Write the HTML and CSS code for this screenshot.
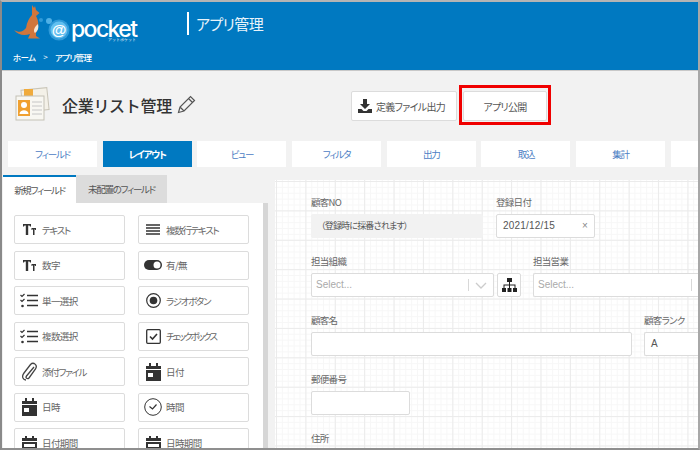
FILE: index.html
```html
<!DOCTYPE html>
<html lang="ja">
<head>
    <meta charset="utf-8">
    <title>アプリ管理</title>
    <link rel="stylesheet" href="styles.css">
</head>
<body>
    <div class="frame">
        <header class="header">
            <div class="header-top">
                <div class="logo">
                    <svg class="logo-mark" width="57" height="38" viewBox="0 0 57 38">
                        <path d="M0 25 C5 28 9 27 12 23 C13 17 15 13 18 10 L18 5 L18 0 L20 3 L21 1 L22 5 L25.500 8 L22 11 C25 16 25 23 22 28 L22 31 L26 33.500 L14 33.500 L16 29 C10 31 4 30 0 25 Z" fill="#d0763c"/>
                        <path d="M24 19 C25 23 24 26 21 28 C19 26 20 22 24 19 Z" fill="#f6e6d4"/>
                        <circle cx="27" cy="15" r="2" fill="#2f9ad8"/>
                        <circle cx="35" cy="16" r="3" fill="#4fb0e6"/>
                        <circle cx="45" cy="25" r="10.500" fill="#2f9ad8"/>
                        <circle cx="45" cy="25" r="8.500" fill="#62c0f0"/>
                        <text x="45" y="30" text-anchor="middle" class="logo-at">@</text>
                    </svg>
                    <span class="logo-text">pocket<small>アットポケット</small></span>
                </div>
                <div class="app-title">アプリ管理</div>
            </div>
            <nav class="crumbs"><b>ホーム</b><i>&gt;</i><b>アプリ管理</b></nav>
        </header>

        <section class="title-bar">
            <div class="page-title">
                <svg class="cards" width="36" height="36" viewBox="0 0 36 36">
                    <rect x="8" y="3" width="26" height="22" fill="#f4f1e8" stroke="#c9c5b8" transform="rotate(-6 20 14)"/>
                    <rect x="10" y="3" width="9" height="9" fill="#f0ab3c"/>
                    <rect x="2" y="10" width="28" height="24" fill="#f8f7f2" stroke="#c4c1b6"/>
                    <rect x="4" y="14" width="12" height="16" fill="#f0a030"/>
                    <circle cx="10" cy="19" r="3" fill="#fff"/>
                    <path d="M5.500 28 C5.500 23 14.500 23 14.500 28 Z" fill="#fff"/>
                    <path d="M18 16 H28 M18 20 H28 M18 24 H28 M18 28 H28" stroke="#c6c6c6"/>
                </svg>
                <h1>企業リスト管理</h1>
                <svg class="pencil" width="19" height="19" viewBox="0 0 19 19" fill="none" stroke="#555" stroke-width="1.200">
                    <path d="M1.500 17.500 L3 12 L13.500 1.500 L17.500 5.500 L7 16 Z M3 12 L7 16 M11.500 3.500 L15.500 7.500"/>
                </svg>
            </div>
            <div class="actions">
                <button class="action export">
                    <svg width="16" height="16" viewBox="0 0 16 16" fill="#333">
                        <path d="M6 1 H10 V6 H13 L8 11 L3 6 H6 Z"/>
                        <path d="M1 11 H4.500 L6.500 13 H9.500 L11.500 11 H15 V15 H1 Z"/>
                    </svg>
                    定義ファイル出力
                </button>
                <button class="action publish">アプリ公開</button>
            </div>
        </section>

        <nav class="tabs">
            <a class="tab">フィールド</a>
            <a class="tab active">レイアウト</a>
            <a class="tab">ビュー</a>
            <a class="tab">フィルタ</a>
            <a class="tab">出力</a>
            <a class="tab">取込</a>
            <a class="tab">集計</a>
            <a class="tab"></a>
        </nav>

        <main class="workspace">
            <aside class="palette">
                <div class="palette-tabs">
                    <span class="ptab current">新規フィールド</span>
                    <span class="ptab">未配置のフィールド</span>
                </div>
                <div class="palette-body">
                    <div class="palette-grid">
                        <div class="field-btn kana"><span class="ic"><svg width="13" height="11" viewBox="0 0 13 11" fill="#333"><path d="M0 0 H8 V2.500 H7 L6.500 1.500 H5.200 V11 H2.800 V1.500 H1.500 L1 2.500 H0 Z"/><path d="M8.500 4 H13 V6 H12.200 L12 5.300 H11.500 V11 H10 V5.300 H9.500 L9.300 6 H8.500 Z"/></svg></span>テキスト</div>
                        <div class="field-btn kana"><span class="ic"><svg width="14" height="11" viewBox="0 0 14 11" stroke="#333" stroke-width="1.300"><path d="M0 1 H14 M0 4 H14 M0 7 H14 M0 10 H14"/></svg></span>複数行テキスト</div>
                        <div class="field-btn"><span class="ic"><svg width="13" height="11" viewBox="0 0 13 11" fill="#333"><path d="M0 0 H8 V2.500 H7 L6.500 1.500 H5.200 V11 H2.800 V1.500 H1.500 L1 2.500 H0 Z"/><path d="M8.500 4 H13 V6 H12.200 L12 5.300 H11.500 V11 H10 V5.300 H9.500 L9.300 6 H8.500 Z"/></svg></span>数字</div>
                        <div class="field-btn"><span class="ic"><svg width="18" height="10" viewBox="0 0 18 10"><rect width="18" height="10" rx="5" fill="#333"/><circle cx="13" cy="5" r="3.500" fill="#fff"/></svg></span>有/無</div>
                        <div class="field-btn"><span class="ic"><svg width="18" height="15" viewBox="0 0 18 15" fill="none" stroke="#333"><path d="M0.500 2 L2 3.500 L4.500 1 M0.500 7 L2 8.500 L4.500 6" stroke-width="1.200"/><circle cx="2.500" cy="13" r="1.300" fill="#333" stroke="none"/><path d="M7 2.500 H18 M7 7.500 H18 M7 12.500 H18" stroke-width="1.600"/></svg></span>単一選択</div>
                        <div class="field-btn kana"><span class="ic"><svg width="15" height="15" viewBox="0 0 15 15" fill="none" stroke="#333"><circle cx="7.500" cy="7.500" r="6.800" stroke-width="1.200"/><circle cx="7.500" cy="7.500" r="3.800" fill="#333" stroke="none"/></svg></span>ラジオボタン</div>
                        <div class="field-btn"><span class="ic"><svg width="18" height="15" viewBox="0 0 18 15" fill="none" stroke="#333"><path d="M0.500 2 L2 3.500 L4.500 1 M0.500 7 L2 8.500 L4.500 6" stroke-width="1.200"/><circle cx="2.500" cy="13" r="1.300" fill="#333" stroke="none"/><path d="M7 2.500 H18 M7 7.500 H18 M7 12.500 H18" stroke-width="1.600"/></svg></span>複数選択</div>
                        <div class="field-btn kana tight"><span class="ic"><svg width="15" height="15" viewBox="0 0 15 15" fill="none" stroke="#333" stroke-width="1.300"><rect x="0.700" y="0.700" width="13.600" height="13.600" rx="1"/><path d="M4 7.500 L6.500 10 L11 5" stroke-width="1.600"/></svg></span>チェックボックス</div>
                        <div class="field-btn kana"><span class="ic"><svg width="15" height="19" viewBox="0 0 15 19" fill="none" stroke="#444" stroke-width="1.300"><path d="M12 5 L4.500 14 C3 16 5.500 17.500 7 16 L13.500 7 C16 3 11.500 -0.500 8.500 2.500 L2 11 C-1 15 1.500 18 4 18"/></svg></span>添付ファイル</div>
                        <div class="field-btn"><span class="ic"><svg width="15" height="18" viewBox="0 0 15 18" fill="#333"><path d="M3 0 H5 V3 H10 V0 H12 V3 H15 V6 H0 V3 H3 Z"/><path d="M0 7 H15 V18 H0 Z M2 10 V14 H7 V10 Z" fill-rule="evenodd"/></svg></span>日付</div>
                        <div class="field-btn"><span class="ic"><svg width="15" height="18" viewBox="0 0 15 18" fill="#333"><path d="M3 0 H5 V3 H10 V0 H12 V3 H15 V6 H0 V3 H3 Z"/><path d="M0 7 H15 V18 H0 Z M2 10 V14 H7 V10 Z" fill-rule="evenodd"/></svg></span>日時</div>
                        <div class="field-btn"><span class="ic"><svg width="18" height="18" viewBox="0 0 18 18" fill="none" stroke="#333"><circle cx="9" cy="9" r="8.300"/><path d="M5.500 8.500 L8.500 11 L12.500 6.500" stroke-width="1.200"/></svg></span>時間</div>
                        <div class="field-btn"><span class="ic"><svg width="15" height="14" viewBox="0 0 15 14" fill="#333"><path d="M3 0 H5 V2 H10 V0 H12 V2 H15 V5 H0 V2 H3 Z"/><path d="M0 6 H15 V14 H0 Z M2 8 V11 H13 V8 Z" fill-rule="evenodd"/></svg></span>日付期間</div>
                        <div class="field-btn"><span class="ic"><svg width="15" height="14" viewBox="0 0 15 14" fill="#333"><path d="M3 0 H5 V2 H10 V0 H12 V2 H15 V5 H0 V2 H3 Z"/><path d="M0 6 H15 V14 H0 Z M2 8 V11 H13 V8 Z" fill-rule="evenodd"/></svg></span>日時期間</div>
                    </div>
                    <div class="scrollbar"></div>
                </div>
            </aside>

            <section class="canvas">
                <div class="row first">
                    <div class="field w172"><label>顧客NO</label><div class="input readonly">（登録時に採番されます）</div></div>
                    <div class="field w99"><label>登録日付</label><div class="input date"><span>2021/12/15</span><em>×</em></div></div>
                </div>
                <div class="row">
                    <div class="field w210">
                        <label>担当組織</label>
                        <div class="with-btn">
                            <div class="input select"><span>Select...</span><u></u><svg width="12" height="7" viewBox="0 0 12 7" fill="none" stroke="#ccc" stroke-width="1.300"><path d="M1 1 L6 6 L11 1"/></svg></div>
                            <div class="org-btn"><svg width="15" height="14" viewBox="0 0 15 14" fill="#222"><rect x="5" y="0" width="5" height="4"/><rect x="0" y="10" width="4" height="4"/><rect x="5.500" y="10" width="4" height="4"/><rect x="11" y="10" width="4" height="4"/><path d="M7 4 H8 V6.500 H13.500 V10 H12.500 V7.500 H8 V10 H7 V7.500 H2.500 V10 H1.500 V6.500 H7 Z"/></svg></div>
                        </div>
                    </div>
                    <div class="field rest"><label>担当営業</label><div class="input select open-end"><span>Select...</span><u></u></div></div>
                </div>
                <div class="row">
                    <div class="field w321"><label>顧客名</label><div class="input"></div></div>
                    <div class="field rest"><label>顧客ランク</label><div class="input open-end rank">A</div></div>
                </div>
                <div class="row">
                    <div class="field w99"><label>郵便番号</label><div class="input"></div></div>
                </div>
                <div class="row">
                    <div class="field"><label>住所</label></div>
                </div>
            </section>
        </main>
    </div>
</body>
</html>
```

FILE: styles.css
```css
html, body {
    margin: 0;
    height: 100%;
}
body {
    font-family: "Noto Sans CJK JP", "Liberation Sans", sans-serif;
    font-feature-settings: "palt";
    overflow: hidden;
    background: #f2f2f2;
    color: #555;
}
.frame {
    width: 700px;
    height: 450px;
    box-sizing: border-box;
    border-top: 2px solid #b4b4b4;
    border-left: 2px solid #8a8a8a;
    border-right: 2px solid #a8a8a8;
    border-bottom: 2px solid #8f8f8f;
    overflow: hidden;
    display: flex;
    flex-direction: column;
}

/* header */
.header {
    height: 68px;
    flex: none;
    background: #0079c1;
    color: #fff;
    border-bottom: 1px solid #c8c8c8;
    box-sizing: content-box;
    margin-bottom: -1px;
}
.header-top {
    display: flex;
    height: 44px;
}
.logo {
    width: 185px;
    display: flex;
    align-items: flex-start;
    padding: 3px 0 0 12px;
    box-sizing: border-box;
}
.logo-at {
    font: bold 15px "Liberation Sans", sans-serif;
    fill: #fff;
}
.logo-text {
    font: 500 23px/16px "Inter", "Liberation Sans", sans-serif;
    letter-spacing: -1.600px;
    position: relative;
    margin: 16px 0 0 0;
}
.logo-text small {
    position: absolute;
    right: 0;
    top: 16px;
    font-size: 4px;
    line-height: 5px;
    letter-spacing: 0;
}
.app-title {
    margin-top: 10px;
    height: 23px;
    border-left: 2px solid #fff;
    padding-left: 7px;
    font-size: 15px;
    line-height: 24px;
    letter-spacing: -0.600px;
    color: #e8f3fa;
}
.crumbs {
    display: flex;
    align-items: center;
    gap: 8px;
    padding-left: 11px;
    margin-top: 4px;
    font-size: 8.500px;
    line-height: 14px;
    letter-spacing: -0.700px;
}
.crumbs b {
    font-weight: 500;
}
.crumbs i {
    font-style: normal;
    font-size: 8px;
}

/* title and buttons */
.title-bar {
    height: 71px;
    flex: none;
    display: flex;
    align-items: flex-start;
}
.page-title {
    width: 349px;
    padding: 16px 0 0 12px;
    box-sizing: border-box;
    display: flex;
    align-items: center;
}
.page-title h1 {
    margin: 2px 5px 0 12px;
    font-size: 16px;
    line-height: 24px;
    font-weight: 500;
    font-feature-settings: normal;
    letter-spacing: -0.300px;
    color: #333;
}
.actions {
    display: flex;
    margin-top: 21px;
    gap: 6px;
}
.action {
    height: 30px;
    padding: 0;
    background: #fff;
    border: 1px solid #dcdcdc;
    border-radius: 2px;
    font-family: inherit;
    font-feature-settings: inherit;
    font-size: 10px;
    letter-spacing: -0.700px;
    color: #555;
    width: 106px;
    display: flex;
    align-items: center;
    justify-content: center;
    gap: 3px;
}
.export {
    padding-right: 6px;
}
.publish {
    width: 84px;
    position: relative;
}
.publish::after {
    content: "";
    position: absolute;
    left: -5px;
    right: -5px;
    top: -7px;
    bottom: -5px;
    border: 3px solid #f00000;
}

/* tabs */
.tabs {
    height: 26px;
    flex: none;
    display: flex;
    gap: 5.700px;
    padding-left: 6px;
}
.tab {
    flex: none;
    width: 89px;
    background: #fff;
    color: #4d80c4;
    font-size: 9.500px;
    line-height: 26px;
    letter-spacing: -1.200px;
    text-align: center;
}
.tab.active {
    background: #0079c1;
    color: #fff;
    font-weight: 700;
}

/* palette */
.workspace {
    flex: 1;
    min-height: 0;
    display: flex;
    margin-top: 8px;
}
.palette {
    width: 266px;
    flex: none;
    display: flex;
    flex-direction: column;
    margin-right: 7px;
}
.palette-tabs {
    display: flex;
    height: 28px;
    flex: none;
    padding-left: 1px;
}
.ptab {
    font-size: 9.500px;
    line-height: 29px;
    letter-spacing: -1.300px;
    background: #dcdcdc;
    width: 91px;
    text-align: center;
}
.ptab.current {
    width: 73px;
    background: #fff;
    border-top: 2px solid #0079c1;
    line-height: 26px;
    box-sizing: border-box;
}
.palette-body {
    flex: 1;
    background: #fff;
    margin-left: 1px;
    display: flex;
    justify-content: space-between;
    overflow: hidden;
}
.palette-grid {
    display: grid;
    grid-template-columns: 111px 111px;
    grid-auto-rows: 29px;
    column-gap: 13px;
    row-gap: 6.500px;
    padding: 12px 0 0 11px;
}
.field-btn {
    border: 1px solid #dcdcdc;
    border-radius: 2px;
    background: #fff;
    box-sizing: border-box;
    display: flex;
    align-items: center;
    gap: 4px;
    padding-left: 5px;
    font-size: 9.500px;
    line-height: 12px;
    letter-spacing: -0.600px;
    color: #666;
}
.field-btn.kana {
    letter-spacing: -1.300px;
}
.field-btn.tight {
    letter-spacing: -2px;
}
.ic {
    width: 18px;
    flex: none;
    display: flex;
    justify-content: center;
}
.scrollbar {
    width: 5px;
    margin-right: 0;
    background: #d6d6d6;
}

/* form canvas */
.canvas {
    flex: 1;
    min-width: 0;
    overflow: hidden;
    margin-top: 5px;
    padding-left: 36px;
    background-color: #fff;
    background-image:
        linear-gradient(#ebebeb 1px, transparent 1px),
        linear-gradient(90deg, #ebebeb 1px, transparent 1px),
        linear-gradient(#f7f7f7 1px, transparent 1px),
        linear-gradient(90deg, #f7f7f7 1px, transparent 1px);
    background-size: 29.400px 29.400px, 29.400px 29.400px, 5.880px 5.880px, 5.880px 5.880px;
    background-position: 1px 1px;
}
.row {
    display: flex;
    gap: 13px;
    height: 59px;
    flex: none;
}
.row.first {
    margin-top: 15px;
}
.field {
    flex: none;
}
.w99 { width: 99px; }
.w172 { width: 172px; }
.w210 { width: 210px; margin-right: -1px; }
.w321 { width: 321px; margin-right: -1px; }
.rest { flex: 1; min-width: 0; }
.field label {
    display: block;
    font-size: 9.500px;
    line-height: 14px;
    height: 19px;
    letter-spacing: -0.700px;
    color: #666;
}
.input {
    height: 24px;
    box-sizing: border-box;
    background: #fff;
    border: 1px solid #dcdcdc;
    border-radius: 2px;
    font-size: 10px;
    line-height: 22px;
    color: #555;
}
.input.readonly {
    background: #f2f2f2;
    border-color: #f2f2f2;
    padding-left: 9px;
    font-size: 9px;
    letter-spacing: -0.800px;
}
.input.date {
    display: flex;
    justify-content: space-between;
    padding: 0 6px;
    font-family: "Liberation Sans", sans-serif;
    letter-spacing: 0.200px;
}
.input.date em {
    font-style: normal;
    color: #888;
}
.with-btn {
    display: flex;
    gap: 3px;
}
.select {
    flex: 1;
    display: flex;
    align-items: center;
    padding: 0 6px 0 4px;
    font-family: "Liberation Sans", sans-serif;
    color: #aaa;
}
.select span {
    flex: 1;
}
.select u {
    width: 1px;
    height: 12px;
    background: #d8d8d8;
    margin-right: 6px;
}
.org-btn {
    width: 24px;
    height: 24px;
    box-sizing: border-box;
    background: #fff;
    border: 1px solid #dcdcdc;
    border-radius: 2px;
    display: flex;
    align-items: center;
    justify-content: center;
}
.open-end {
    border-right: 0;
    padding-right: 0;
    border-radius: 2px 0 0 2px;
}
.rank {
    padding-left: 6px;
    font-family: "Liberation Sans", sans-serif;
}
```
